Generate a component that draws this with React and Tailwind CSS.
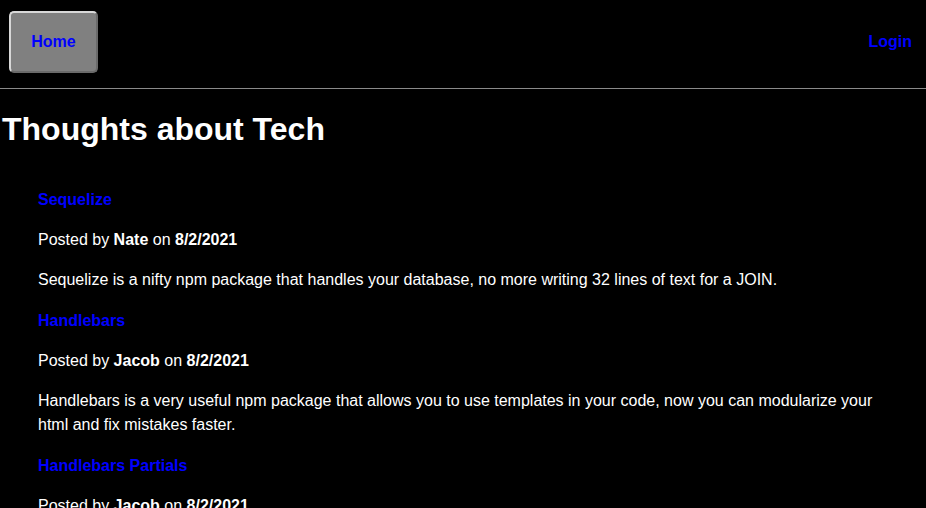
const posts = [
	{
		title: 'Sequelize',
		author: 'Nate',
		date: '8/2/2021',
		body: 'Sequelize is a nifty npm package that handles your database, no more writing 32 lines of text for a JOIN.',
	},
	{
		title: 'Handlebars',
		author: 'Jacob',
		date: '8/2/2021',
		body: 'Handlebars is a very useful npm package that allows you to use templates in your code, now you can modularize your html and fix mistakes faster.',
	},
	{
		title: 'Handlebars Partials',
		author: 'Jacob',
		date: '8/2/2021',
		body: 'Partials let you reuse small pieces of a template across pages.',
	},
];

const PostItem = ({ post }) => (
	<div>
		<a href="#" className="block font-bold text-[#0000ff] leading-6 mb-4">
			{post.title}
		</a>
		<p className="leading-6 mb-4">
			Posted by <b>{post.author}</b> on <b>{post.date}</b>
		</p>
		<p className="leading-6 mb-[17px]">{post.body}</p>
	</div>
);

export default function App() {
	return (
		<div className="h-[508px] bg-black text-white text-base font-['Liberation_Sans',Arial,sans-serif] overflow-hidden">
			<header className="h-[89px] flex items-start justify-between pl-[9px] pr-[14px] pt-[11px] border-b border-[#8a8a8a]">
				<a
					href="#"
					className="w-[89px] h-[62px] flex items-center justify-center rounded-[5px] bg-[#808080] border-2 border-t-[#d8d8d8] border-l-[#d8d8d8] border-r-[#6a6a6a] border-b-[#6a6a6a] font-bold text-[#0000ff]"
				>
					Home
				</a>
				<a href="#" className="mt-[19px] font-bold text-[#0000ff] leading-6">
					Login
				</a>
			</header>
			<h1 className="text-[32px] font-bold leading-[37px] mt-[22px] mb-[40px] pl-[2px]">
				Thoughts about Tech
			</h1>
			<div className="px-[38px]">
				{posts.map((post) => (
					<PostItem key={post.title} post={post} />
				))}
			</div>
		</div>
	);
}
